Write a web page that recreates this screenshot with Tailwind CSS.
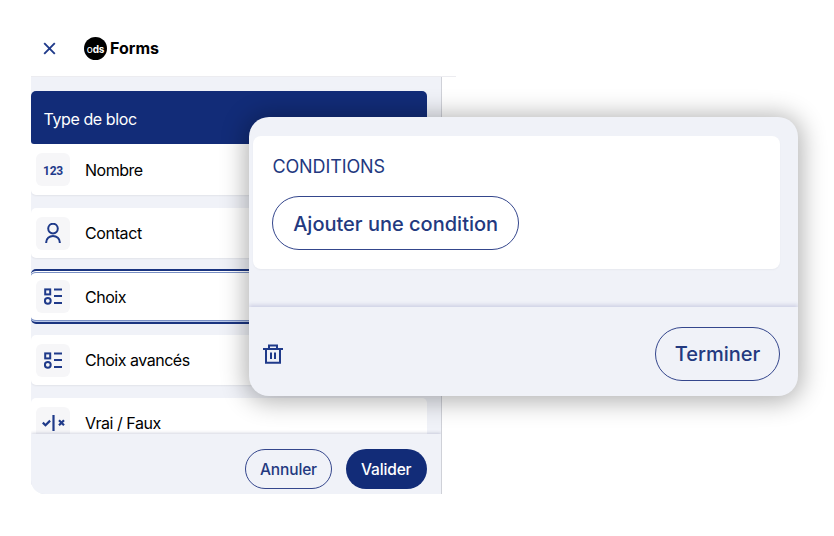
<!DOCTYPE html>
<html lang="fr">
<head>
    <meta charset="UTF-8">
    <meta name="viewport" content="width=device-width, initial-scale=1.0">
    <title>ods Forms</title>
    <script src="https://cdn.jsdelivr.net/npm/@tailwindcss/browser@4"></script>
</head>
<body class="relative w-[834px] h-[536px] overflow-hidden bg-white font-['Inter',sans-serif] text-black">
    <div class="pl-[31px]">
        <!-- Header -->
        <header class="flex items-center w-[425px] h-[77px] pt-5 pl-3 border-b border-[#ececf0]">
            <svg class="w-[13px] h-[13px]" viewBox="0 0 13 13" fill="none" stroke="#1f3a8a" stroke-width="1.9">
                <path d="M1.2 1.2l10.6 10.6M11.8 1.2L1.2 11.8" />
            </svg>
            <div class="flex items-center justify-center ml-[28px] w-[23px] h-[23px] rounded-full bg-black text-white text-[10px] leading-none font-bold tracking-[-0.2px] pt-px">
                <span class="font-normal">o</span><span>ds</span>
            </div>
            <span class="ml-[3px] text-[16px] leading-5 font-bold">Forms</span>
        </header>

        <!-- Block type list -->
        <div class="flex flex-col w-[411px] h-[417px] bg-[#f0f2f8] border-r border-[#cfd1d8] rounded-bl-[14px] overflow-hidden">
            <div class="h-[357px] pt-[14px] pr-[14.5px] overflow-hidden">
                <h2 class="flex items-center h-[53px] pl-[12.5px] pt-0.5 rounded-t-[5px] rounded-bl-[3px] bg-[#122c78] text-white text-[16px] tracking-[-0.4px]">Type de bloc</h2>
                <ul class="flex flex-col gap-[13px] text-[16px] tracking-[-0.48px]">
                    <li class="flex items-center h-[51px] pl-[5px] rounded-b-[5px] bg-white shadow-[0_1px_2px_rgba(0,0,0,0.06)]">
                        <span class="flex items-center justify-center w-[34px] h-[33px] pt-0.5 rounded-[6px] bg-[#f6f6f8] text-[#1f3a8a] text-[12px] font-bold font-['Roboto',sans-serif] tracking-[-0.2px]">123</span>
                        <span class="ml-[15px]">Nombre</span>
                    </li>
                    <li class="flex items-center h-[50px] pl-[5px] rounded-[5px] bg-white shadow-[0_1px_2px_rgba(0,0,0,0.06)]">
                        <span class="flex items-center justify-center w-[34px] h-[33px] rounded-[6px] bg-[#f6f6f8]">
                            <svg class="w-4 h-5" viewBox="0 0 16 20" fill="none" stroke="#1f3a8a" stroke-width="2">
                                <circle cx="8" cy="5.6" r="4.8" />
                                <path d="M1.2 20v-.8a6.8 6.2 0 0 1 13.6 0v.8" />
                            </svg>
                        </span>
                        <span class="ml-[15px] tracking-[-0.36px]">Contact</span>
                    </li>
                    <!-- selected -->
                    <li class="flex items-center h-[55px] -mt-[2px] -mb-[3px] pl-[5px] rounded-[5px] bg-white border-y-2 border-[#1a3480] shadow-[inset_0_1px_0_#fff,inset_0_2px_0_#7a90c4,inset_0_-1px_0_#b9c8e8,inset_0_-2px_0_#7a90c4]">
                        <span class="flex items-center justify-center w-[34px] h-[33px] rounded-[6px] bg-[#f6f6f8]">
                            <svg class="w-[18px] h-[17px]" viewBox="0 0 18 17" fill="none" stroke="#1f3a8a" stroke-width="2">
                                <rect x="1.2" y="1.4" width="5" height="5" />
                                <circle cx="3.8" cy="12.8" r="2.9" />
                                <path d="M10 1.5h8M10 8h8M10 15h8" />
                            </svg>
                        </span>
                        <span class="ml-[15px]">Choix</span>
                    </li>
                    <li class="flex items-center h-[50px] mt-[1px] pl-[5px] rounded-[5px] bg-white shadow-[0_1px_2px_rgba(0,0,0,0.06)]">
                        <span class="flex items-center justify-center w-[34px] h-[33px] rounded-[6px] bg-[#f6f6f8]">
                            <svg class="w-[18px] h-[17px]" viewBox="0 0 18 17" fill="none" stroke="#1f3a8a" stroke-width="2">
                                <rect x="1.2" y="1.4" width="5" height="5" />
                                <circle cx="3.8" cy="12.8" r="2.9" />
                                <path d="M10 1.5h8M10 8h8M10 15h8" />
                            </svg>
                        </span>
                        <span class="ml-[15px]">Choix avancés</span>
                    </li>
                    <li class="flex items-center h-[50px] pl-[5px] rounded-[5px] bg-white">
                        <span class="flex items-center justify-center w-[34px] h-[33px] rounded-[6px] bg-[#f6f6f8]">
                            <svg class="w-[23px] h-4" viewBox="0 0 23 16" fill="none" stroke="#1f3a8a" stroke-width="2.2">
                                <path d="M.8 7.6l2.7 2.6 4.6-4.6M11.5 0v16M17 5.3l5 5M22 5.3l-5 5" />
                            </svg>
                        </span>
                        <span class="ml-[15px]">Vrai / Faux</span>
                    </li>
                </ul>
            </div>
            <footer class="relative flex justify-end items-start gap-[14px] h-[60px] pt-[15px] pr-[14.5px] bg-[#f0f2f8] shadow-[0_-1px_3px_rgba(60,70,120,0.22)] text-[15.5px] font-medium tracking-[-0.15px]">
                <button class="w-[87px] h-10 pt-px border border-[#34468c] rounded-full text-[#23397f]">Annuler</button>
                <button class="w-[80.5px] h-10 pt-px rounded-full bg-[#122c78] text-white">Valider</button>
            </footer>
        </div>
    </div>

    <!-- Conditions popup -->
    <section class="absolute left-[249px] top-[117px] flex flex-col w-[548.5px] h-[279px] rounded-[20px] bg-[#f0f2f8] shadow-[0_2px_24px_4px_rgba(0,0,0,0.3)] overflow-hidden text-[#23397f]">
        <div class="h-[190px] pt-[19px] pl-1 pr-[17.5px]">
            <div class="h-[133px] pt-[19px] pl-[19.4px] rounded-lg bg-white shadow-[0_1px_2px_rgba(0,0,0,0.04)]">
                <h3 class="text-[18px] leading-6 tracking-[-0.1px]">CONDITIONS</h3>
                <button class="mt-[17px] w-[246.5px] h-[54px] pt-px border border-[#34468c] rounded-full text-[20px] font-medium">Ajouter une condition</button>
            </div>
        </div>
        <footer class="flex items-center justify-between h-[89px] pl-[14px] pr-[17.5px] pt-1 shadow-[0_-2px_4px_rgba(80,85,160,0.22)]">
            <svg class="w-5 h-5" viewBox="0 0 20 20" fill="none" stroke="#1f3a8a" stroke-width="2">
                <path d="M0 5h20M6 5V1.4h8V5M3 5v13.8h14V5M8 8.5v6.5M12 8.5v6.5" />
            </svg>
            <button class="w-[125px] h-[54px] pt-px border border-[#34468c] rounded-full text-[20px] font-medium">Terminer</button>
        </footer>
    </section>
</body>
</html>
